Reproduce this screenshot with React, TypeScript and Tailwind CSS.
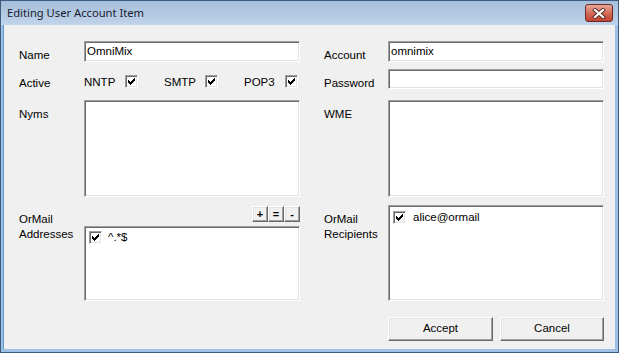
import React from 'react';

const FONT = { fontFamily: '"Liberation Sans", Arial, sans-serif' };

// classic 7x7 check glyph
const CHECK = ['......#', '.....##', '#...###', '##.###.', '#####..', '.###...', '..#....'];

const Sunken = ({ className = '', children }: { className?: string; children?: React.ReactNode }) => (
  <div
    className={`bg-white border border-t-[#a0a0a0] border-l-[#a0a0a0] border-b-white border-r-white shadow-[inset_1px_1px_0_#696969,inset_-1px_-1px_0_#e3e3e3] ${className}`}
  >
    {children}
  </div>
);

const Raised = ({ className = '', children }: { className?: string; children?: React.ReactNode }) => (
  <div
    className={`flex items-center justify-center bg-[#f0f0f0] border border-t-white border-l-white border-b-[#696969] border-r-[#696969] shadow-[inset_-1px_-1px_0_#a0a0a0,inset_1px_1px_0_#e3e3e3] ${className}`}
  >
    {children}
  </div>
);

const CheckBox = ({ className = '' }: { className?: string }) => (
  <Sunken className={`w-[13px] h-[13px] shrink-0 flex items-center justify-center ${className}`}>
    <svg width="7" height="7" viewBox="0 0 7 7" shapeRendering="crispEdges">
      {CHECK.map((row, y) =>
        row.split('').map((c, x) => (c === '#' ? <rect key={`${x}-${y}`} x={x} y={y} width="1" height="1" fill="#000" /> : null))
      )}
    </svg>
  </Sunken>
);

const Label = ({ w, children }: { w: string; children: React.ReactNode }) => (
  <div className={`${w} shrink-0 mt-[7px] leading-[15px]`}>{children}</div>
);

export default function App() {
  return (
    <div
      style={FONT}
      className="w-[619px] h-[353px] flex flex-col bg-[#9fc0e2] border border-[#3b5c80] text-[11.5px] text-black overflow-hidden"
    >
      {/* Title bar */}
      <div className="h-[24px] shrink-0 flex items-center justify-between pl-[6px] pr-[5px] bg-gradient-to-b from-[#a5bedb] to-[#c0d4ea]">
        <span
          className="text-[11.2px] text-[#1a1a2e]"
          style={{ fontFamily: '"Noto Sans", "Open Sans", sans-serif' }}
        >
          Editing User Account Item
        </span>
        <div className="w-[28px] h-[18px] rounded-[3px] border border-[#6b2a24] bg-gradient-to-b from-[#e9a89a] via-[#d36c58] to-[#c2402e] flex items-center justify-center">
          <svg width="14" height="11" viewBox="0 0 14 11">
            <path d="M3 2 L11 9 M11 2 L3 9" stroke="#5a2a26" strokeWidth="4" strokeLinecap="square" />
            <path d="M3 2 L11 9 M11 2 L3 9" stroke="#ffffff" strokeWidth="2.2" strokeLinecap="square" />
          </svg>
        </div>
      </div>

      {/* Body */}
      <div className="flex-1 flex flex-col bg-[#f0f0f0] ml-[2px] mr-[3px] mb-[3px] pl-[15px] pt-[16px] border-l border-[#5d98cf]">
        {/* Row 1 */}
        <div className="flex items-start h-[21px]">
          <Label w="w-[65px]">Name</Label>
          <Sunken className="w-[216px] h-[21px] pl-[2px] pt-[2px] leading-[15px]">OmniMix</Sunken>
          <div className="w-[24px] shrink-0" />
          <Label w="w-[64px]">Account</Label>
          <Sunken className="w-[216px] h-[21px] pl-[2px] pt-[2px] leading-[15px]">omnimix</Sunken>
        </div>

        {/* Row 2 */}
        <div className="flex items-start h-[20px] mt-[7px]">
          <Label w="w-[65px]">Active</Label>
          <div className="w-[216px] shrink-0 flex">
            {['NNTP', 'SMTP', 'POP3'].map((p, i) => (
              <div key={p} className={`${i < 2 ? 'w-[80px]' : 'w-[56px]'} shrink-0 flex items-start`}>
                <span className="w-[41px] shrink-0 mt-[6px] leading-[15px]">{p}</span>
                <CheckBox className="mt-[6px]" />
              </div>
            ))}
          </div>
          <div className="w-[24px] shrink-0" />
          <Label w="w-[64px]">Password</Label>
          <Sunken className="w-[216px] h-[20px]" />
        </div>

        {/* Row 3 */}
        <div className="flex items-start h-[97px] mt-[11px]">
          <Label w="w-[65px]">Nyms</Label>
          <Sunken className="w-[216px] h-[97px]" />
          <div className="w-[24px] shrink-0" />
          <Label w="w-[64px]">WME</Label>
          <Sunken className="w-[216px] h-[97px]" />
        </div>

        {/* Row 4 */}
        <div className="flex items-start h-[96px] mt-[8px]">
          <Label w="w-[65px]">
            OrMail
            <br />
            Addresses
          </Label>
          <div className="w-[216px] flex flex-col">
            <div className="flex justify-end mt-[1px] h-[16px]">
              {['+', '=', '-'].map((s) => (
                <Raised key={s} className="w-[16px] h-[16px] font-bold text-[11px] leading-none">
                  {s}
                </Raised>
              ))}
            </div>
            <Sunken className="h-[75px] mt-[4px] flex items-start pl-[4px] pt-[4px]">
              <CheckBox />
              <span className="ml-[6px] leading-[13px]">^.*$</span>
            </Sunken>
          </div>
          <div className="w-[24px] shrink-0" />
          <Label w="w-[64px]">
            OrMail
            <br />
            Recipients
          </Label>
          <Sunken className="w-[216px] h-[96px] flex items-start pl-[4px] pt-[5px]">
            <CheckBox />
            <span className="ml-[7px] leading-[12px]">alice@ormail</span>
          </Sunken>
        </div>

        {/* Buttons */}
        <div className="flex justify-end gap-[7px] mt-[16px] pr-[11px]">
          <Raised className="w-[105px] h-[24px]">Accept</Raised>
          <Raised className="w-[104px] h-[24px]">Cancel</Raised>
        </div>
      </div>
    </div>
  );
}
